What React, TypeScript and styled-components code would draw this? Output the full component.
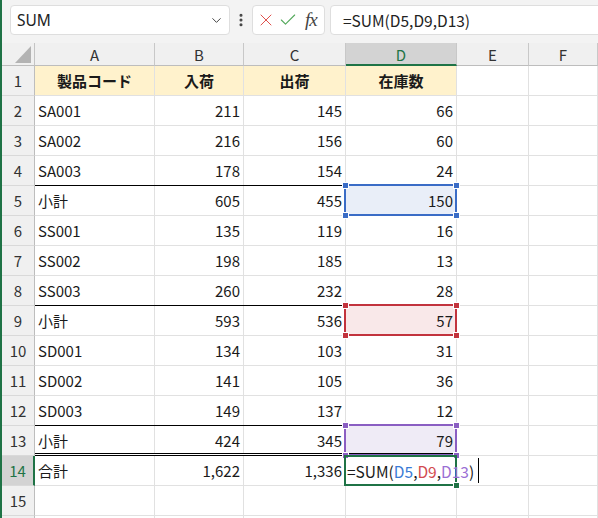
import React from 'react';
import styled, { createGlobalStyle, css } from 'styled-components';
import { ChevronDown, EllipsisVertical, X, Check } from 'lucide-react';

const GlobalStyle = createGlobalStyle`
  html, body {
    margin: 0;
    padding: 0;
    background: #fff;
    overflow: hidden;
  }
  body {
    font-family: "Noto Sans CJK JP", "Noto Sans", sans-serif;
  }
`;

const GREEN = '#1f7346';
const CELL_FONT = `"Noto Sans CJK JP", "Noto Sans", sans-serif`;

type Tone = 'blue' | 'red' | 'purple';

const tones: Record<Tone, { line: string; fill: string; text: string }> = {
  blue: { line: '#3a6cc6', fill: '#e9eef8', text: '#3a7bd5' },
  red: { line: '#c2333d', fill: '#f9e8e9', text: '#d24a4f' },
  purple: { line: '#8a5ec2', fill: '#efebf6', text: '#9a6fd4' },
};

type Row = {
  a?: string;
  b?: string;
  c?: string;
  d?: string;
  rule?: 'single' | 'double';
  tone?: Tone;
  editing?: boolean;
  head?: boolean;
};

const rows: Row[] = [
  { a: '製品コード', b: '入荷', c: '出荷', d: '在庫数', head: true },
  { a: 'SA001', b: '211', c: '145', d: '66' },
  { a: 'SA002', b: '216', c: '156', d: '60' },
  { a: 'SA003', b: '178', c: '154', d: '24' },
  { a: '小計', b: '605', c: '455', d: '150', rule: 'single', tone: 'blue' },
  { a: 'SS001', b: '135', c: '119', d: '16' },
  { a: 'SS002', b: '198', c: '185', d: '13' },
  { a: 'SS003', b: '260', c: '232', d: '28' },
  { a: '小計', b: '593', c: '536', d: '57', rule: 'single', tone: 'red' },
  { a: 'SD001', b: '134', c: '103', d: '31' },
  { a: 'SD002', b: '141', c: '105', d: '36' },
  { a: 'SD003', b: '149', c: '137', d: '12' },
  { a: '小計', b: '424', c: '345', d: '79', rule: 'single', tone: 'purple' },
  { a: '合計', b: '1,622', c: '1,336', rule: 'double', editing: true },
  {},
  {},
];

const columns = ['A', 'B', 'C', 'D', 'E', 'F'];
const activeCol = 'D';
const activeRow = 14;
// only the top 2px of row 16 show in the window, so its number is not drawn
const lastLabelled = 15;

const App = () => {
  return (
    <Frame>
      <GlobalStyle />
      <TopBar>
        <NameBox>
          <span>SUM</span>
          <ChevronDown size={15} strokeWidth={1.6} color="#444" />
        </NameBox>
        <Dots>
          <EllipsisVertical size={16} strokeWidth={2.6} color="#444" />
        </Dots>
        <FxBox>
          <X size={20} strokeWidth={1.2} color="#e0504c" />
          <Check size={20} strokeWidth={1.3} color="#52a85a" />
          <FxLabel>fx</FxLabel>
        </FxBox>
        <FormulaBox>=SUM(D5,D9,D13)</FormulaBox>
      </TopBar>

      <Sheet>
        <Corner>
          <Triangle />
        </Corner>
        {columns.map(col => (
          <ColHeader key={col} $active={col === activeCol}>
            {col}
          </ColHeader>
        ))}

        {rows.map((row, i) => {
          const n = i + 1;
          return (
            <React.Fragment key={n}>
              <RowHeader $active={n === activeRow}>{n <= lastLabelled ? n : ''}</RowHeader>
              <Cell $align={row.head ? 'center' : 'left'} $head={row.head} $rule={row.rule}>
                {row.a}
              </Cell>
              <Cell $align={row.head ? 'center' : 'right'} $head={row.head} $rule={row.rule}>
                {row.b}
              </Cell>
              <Cell $align={row.head ? 'center' : 'right'} $head={row.head} $rule={row.rule}>
                {row.c}
              </Cell>
              <Cell
                $align={row.head ? 'center' : 'right'}
                $head={row.head}
                $rule={row.rule}
                $fill={row.tone ? tones[row.tone].fill : undefined}
              >
                {row.d}
                {row.tone && (
                  <RangeBox $color={tones[row.tone].line}>
                    <Handle $color={tones[row.tone].line} $v="top" $h="left" />
                    <Handle $color={tones[row.tone].line} $v="top" $h="right" />
                    <Handle $color={tones[row.tone].line} $v="bottom" $h="left" />
                    <Handle $color={tones[row.tone].line} $v="bottom" $h="right" />
                  </RangeBox>
                )}
                {row.editing && (
                  <ActiveBox>
                    <Editor>
                      =SUM(
                      <Ref $color={tones.blue.text}>D5</Ref>,
                      <Ref $color={tones.red.text}>D9</Ref>,
                      <Ref $color={tones.purple.text}>D13</Ref>)
                      <Caret />
                    </Editor>
                    <FillHandle />
                  </ActiveBox>
                )}
              </Cell>
              <Cell $align="left" />
              <Cell $align="left" />
            </React.Fragment>
          );
        })}
      </Sheet>
    </Frame>
  );
};

const Frame = styled.div`
  width: 598px;
  height: 518px;
  box-sizing: border-box;
  border-left: 2px solid ${GREEN};
  overflow: hidden;
  background: #fff;
`;

const TopBar = styled.div`
  display: flex;
  align-items: center;
  height: 43px;
  padding-left: 8px;
  background: #f3f3f3;
  box-sizing: border-box;
  padding-bottom: 3px;
`;

const boxBase = css`
  height: 30px;
  box-sizing: border-box;
  background: #fff;
  border: 1px solid #dedede;
  border-radius: 4px;
`;

const NameBox = styled.div`
  ${boxBase};
  width: 220px;
  display: flex;
  align-items: center;
  justify-content: space-between;
  padding: 0 5px 0 6px;
  font-family: "Noto Sans", "Liberation Sans", sans-serif;
  font-size: 15.5px;
  color: #222;
`;

const Dots = styled.div`
  width: 22px;
  display: flex;
  justify-content: center;
  align-items: center;
`;

const FxBox = styled.div`
  ${boxBase};
  width: 73px;
  display: flex;
  align-items: center;
  gap: 2px;
  padding-left: 3px;
`;

const FxLabel = styled.span`
  font-family: "Liberation Serif", "DejaVu Serif", serif;
  font-style: italic;
  font-size: 19px;
  color: #444;
  letter-spacing: -1px;
  margin-left: 5px;
`;

const FormulaBox = styled.div`
  ${boxBase};
  flex: 1;
  margin-left: 5px;
  margin-right: -10px;
  display: flex;
  align-items: center;
  padding-left: 12px;
  font-family: ${CELL_FONT};
  font-size: 15.5px;
  color: #222;
`;

const Sheet = styled.div`
  display: grid;
  grid-template-columns: 33px 120px 89px 102px 111px 72px 1fr;
  grid-template-rows: 23px;
  grid-auto-rows: 30px;
  font-family: ${CELL_FONT};
  font-size: 15px;
`;

const headerBase = css`
  box-sizing: border-box;
  background: #f0f0f0;
  color: #333;
  display: flex;
  align-items: center;
  justify-content: center;
`;

const Corner = styled.div`
  ${headerBase};
  border-right: 1px solid #c4c4c4;
  border-bottom: 1px solid #bdbdbd;
  align-items: flex-end;
  justify-content: flex-end;
  padding: 0 3px 2px 0;
`;

const Triangle = styled.div`
  width: 16px;
  height: 17px;
  background: #b3b3b3;
  clip-path: polygon(100% 0, 100% 100%, 0 100%);
`;

const ColHeader = styled.div<{ $active?: boolean }>`
  ${headerBase};
  border-right: 1px solid #c8c8c8;
  border-bottom: ${p => (p.$active ? `2px solid ${GREEN}` : '1px solid #bdbdbd')};
  background: ${p => (p.$active ? '#d3d3d3' : '#f0f0f0')};
  color: ${p => (p.$active ? GREEN : '#333')};
  font-size: 15px;
  padding-top: 1px;
`;

const RowHeader = styled.div<{ $active?: boolean }>`
  ${headerBase};
  border-bottom: 1px solid #d9d9d9;
  border-right: ${p => (p.$active ? `2px solid ${GREEN}` : '1px solid #bdbdbd')};
  background: ${p => (p.$active ? '#d3d3d3' : '#f0f0f0')};
  color: ${p => (p.$active ? GREEN : '#333')};
`;

const Cell = styled.div<{
  $align: 'left' | 'right' | 'center';
  $head?: boolean;
  $rule?: 'single' | 'double';
  $fill?: string;
}>`
  position: relative;
  box-sizing: border-box;
  display: flex;
  align-items: center;
  justify-content: ${p =>
    p.$align === 'left' ? 'flex-start' : p.$align === 'right' ? 'flex-end' : 'center'};
  padding: 0 3px;
  border-right: 1px solid #e1e1e1;
  border-bottom: 1px solid #e1e1e1;
  color: #1a1a1a;
  white-space: nowrap;
  ${p =>
    p.$head &&
    css`
      background: #fff2cc;
      font-weight: 700;
    `}
  ${p => p.$fill && `background: ${p.$fill};`}
  ${p => p.$rule === 'single' && 'box-shadow: 0 -1px 0 #000;'}
  ${p => p.$rule === 'double' && 'box-shadow: 0 -1px 0 #000, 0 -2px 0 #fff, 0 -3px 0 #000;'}
`;

const RangeBox = styled.div<{ $color: string }>`
  position: absolute;
  top: -2px;
  left: -2px;
  right: -1px;
  bottom: -1px;
  border: 2px solid ${p => p.$color};
  z-index: 2;
  pointer-events: none;
`;

const Handle = styled.div<{ $color: string; $v: 'top' | 'bottom'; $h: 'left' | 'right' }>`
  position: absolute;
  width: 5px;
  height: 5px;
  background: ${p => p.$color};
  box-shadow: 0 0 0 1px #fff;
  ${p => `${p.$v}: -3.5px;`}
  ${p => `${p.$h}: -3.5px;`}
`;

const ActiveBox = styled.div`
  position: absolute;
  top: -1px;
  left: -2px;
  right: -1px;
  bottom: -1px;
  border: 2px solid ${GREEN};
  z-index: 3;
  display: flex;
  align-items: center;
`;

const Editor = styled.div`
  display: flex;
  align-items: center;
  padding-left: 1px;
  white-space: nowrap;
  color: #1a1a1a;
  font-size: 15.5px;
`;

const Ref = styled.span<{ $color: string }>`
  color: ${p => p.$color};
`;

const Caret = styled.span`
  display: inline-block;
  width: 1px;
  height: 25px;
  margin-left: 4px;
  background: #000;
`;

const FillHandle = styled.div`
  position: absolute;
  right: -4px;
  bottom: -4px;
  width: 5px;
  height: 5px;
  background: ${GREEN};
  box-shadow: 0 0 0 1px #fff;
`;

export default App;
